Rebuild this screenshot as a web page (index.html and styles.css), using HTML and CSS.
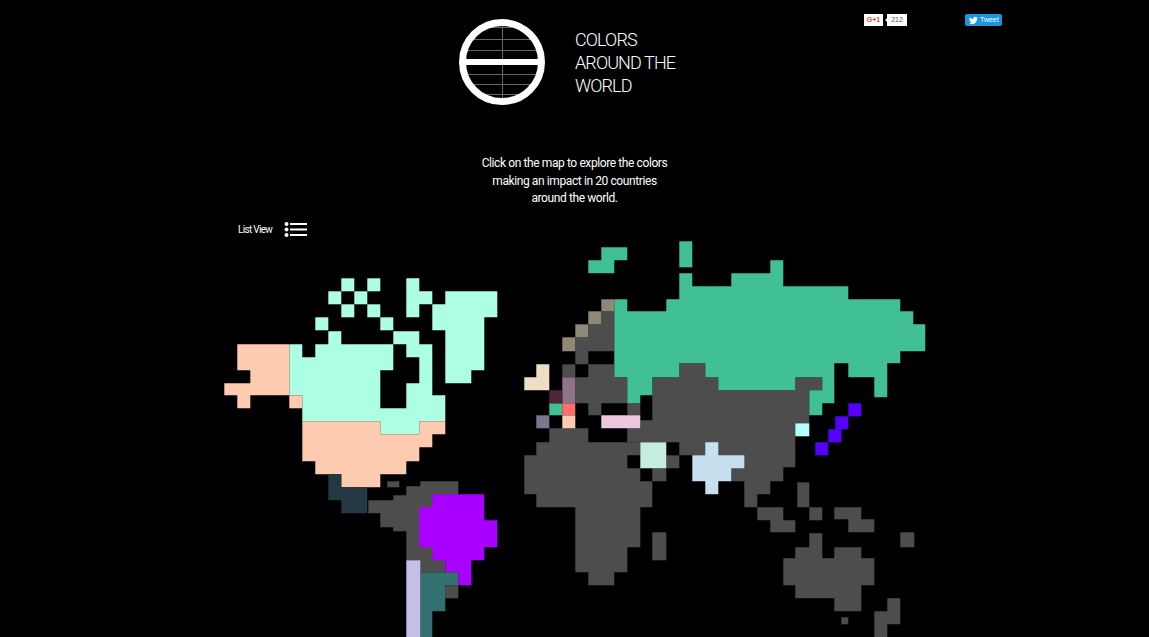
FILE: index.html
```html
<!DOCTYPE html>
<html lang="en">
<head>
    <meta charset="UTF-8">
    <meta name="viewport" content="width=device-width, initial-scale=1.0">
    <title>Colors Around the World</title>
    <link rel="stylesheet" href="styles.css">
</head>
<body>
    <div class="share">
        <div class="gplus">
            <span class="gplus-btn">G+1</span>
            <span class="gplus-count">212</span>
        </div>
        <div class="tweet">
            <svg viewBox="0 0 24 24" width="9" height="9"><path fill="#fff" d="M23.6 4.6c-.9.4-1.8.6-2.8.8 1-.6 1.8-1.5 2.1-2.7-.9.6-2 1-3.1 1.2C18.9 2.9 17.6 2.3 16.3 2.3c-2.7 0-4.900 2.200-4.900 4.900 0 .4 0 .8.1 1.100C7.500 8.100 3.900 6.100 1.500 3.100c-.4.700-.7 1.600-.7 2.500 0 1.700.9 3.200 2.200 4.100-.8 0-1.600-.2-2.200-.6v.1c0 2.400 1.700 4.400 3.900 4.800-.4.1-.8.2-1.300.2-.3 0-.6 0-.9-.1.6 2 2.400 3.400 4.600 3.400-1.700 1.300-3.800 2.100-6.100 2.100-.4 0-.8 0-1.200-.1 2.200 1.400 4.800 2.200 7.500 2.200 9.100 0 14-7.500 14-14v-.6c1-.7 1.800-1.600 2.500-2.500z"/></svg>
            <span>Tweet</span>
        </div>
    </div>

    <header class="header">
        <svg class="logo" viewBox="0 0 86 86" width="86" height="86">
            <path class="logo-grid" d="M30 8.500H56M14 20.500H72M8 31.500H78M8 55.500H78M14 65.500H72M25 75.500H61M43.500 6V80"/>
            <circle class="logo-ring" cx="43" cy="43" r="39.500"/>
            <rect class="logo-bar" x="4" y="40" width="78" height="6"/>
        </svg>
        <h1 class="title">COLORS<br>AROUND THE<br>WORLD</h1>
    </header>

    <p class="intro">Click on the map to explore the colors<br>making an impact in 20 countries<br>around the world.</p>

    <div class="list-view">
        <span>List View</span>
        <svg viewBox="0 0 23 15" width="23" height="15">
            <circle cx="2.500" cy="2" r="2" fill="#fff"/>
            <circle cx="2.500" cy="7.500" r="2" fill="#fff"/>
            <circle cx="2.500" cy="13" r="2" fill="#fff"/>
            <path d="M6 2H23M6 7.500H23M6 13H23" stroke="#fff" stroke-width="2"/>
        </svg>
    </div>

    <svg class="map" viewBox="-0.3 239.700 1149 397" width="1149" height="397">
        <!-- base land -->
        <g class="land">
            <path d="M387 481H399V487H387Z"/>
            <path d="M420 481H458V500H445V572H419V560H406V531H393V527H380V513H368V500H393V495H406V486H420Z"/>
            <path d="M445 585H458V598H445Z"/>
            <path d="M601 311H614V351H588V364H575V337H588V324H601Z"/>
            <path d="M562 364H575V377H562Z"/>
            <path d="M588 364H614V377H627V403H640V415H627V403H601V415H588V403H575V377H588Z"/>
            <path d="M652 377H679V363H705V377H718V390H795V377H822V390H809V423H795V467H783V481H770V494H757V507H744V481H731V468H705V455H679V442H627V428H640V420H652Z"/>
            <path d="M666 455H679V468H666Z"/>
            <path d="M652 468H666V481H652Z"/>
            <path d="M549 428H588V442H640V455H627V468H640V481H652V507H640V547H627V572H614V585H588V572H575V507H536V494H524V455H536V442H549Z"/>
            <path d="M652 532H666V560H652Z"/>
            <path d="M797 482H809V507H797Z"/>
            <path d="M809 507H822V520H809Z"/>
            <path d="M757 507H783V520H795V532H770V520H757Z"/>
            <path d="M834 507H861V519H874V532H848V519H834Z"/>
            <path d="M900 532H914V547H900Z"/>
            <path d="M809 533H822V558H834V547H861V558H874V585H861V611H834V598H795V585H783V558H795V547H809Z"/>
            <path d="M841 617H848V624H841Z"/>
            <path d="M887 598H900V624H887V637H874V611H887Z"/>
        </g>

        <!-- north america -->
        <g class="mint">
            <path d="M341 278H354V291H341Z"/>
            <path d="M367 278H380V291H367Z"/>
            <path d="M328 291H341V304H328Z"/>
            <path d="M354 291H367V304H354Z"/>
            <path d="M341 304H354V317H341Z"/>
            <path d="M367 304H380V317H367Z"/>
            <path d="M315 317H328V330H315Z"/>
            <path d="M380 317H393V330H380Z"/>
            <path d="M406 278H419V291H432V304H419V317H406Z"/>
            <path d="M445 291H497V317H484V370H471V383H445V330H432V304H445Z"/>
            <path d="M289 344H302V357H315V344H328V331H341V344H393V370H380V408H406V383H419V357H406V344H393V331H419V344H432V395H445V421H419V434H380V421H302V395H289Z"/>
        </g>
        <g class="peach">
            <path d="M237 344H289V395H250V408H237V395H224V383H250V370H237Z"/>
            <path d="M289 395H302V408H289Z"/>
            <path d="M302 421H380V434H419V421H445V434H432V447H419V461H406V474H380V487H341V474H315V461H302Z"/>
            <path d="M562 415H575V428H562Z"/>
        </g>
        <path class="dark-teal" d="M328 474H341V487H367V513H341V500H328Z"/>

        <!-- south america -->
        <path class="purple" d="M432 494H484V520H497V547H484V560H471V585H458V572H445V560H432V547H419V507H432Z"/>
        <path class="teal" d="M420 572H458V585H445V611H432V637H420Z"/>
        <path class="lavender" d="M406 560H420V637H406Z"/>

        <!-- russia -->
        <g class="green">
            <path d="M601 247H627V260H614V273H588V260H601Z"/>
            <path d="M679 241H692V267H679Z"/>
            <path d="M614 299H627V311H666V299H679V273H692V286H731V273H770V260H783V286H848V299H900V311H913V324H925V351H900V363H887V397H874V377H848V363H834V403H822V415H809V390H822V377H795V390H718V377H705V363H679V377H652V395H640V403H627V377H614Z"/>
            <path d="M549 403H562V415H549Z"/>
        </g>

        <!-- europe and the rest -->
        <g class="taupe">
            <path d="M601 299H614V311H601Z"/>
            <path d="M588 311H601V324H588Z"/>
            <path d="M575 324H588V337H575Z"/>
            <path d="M562 337H575V351H562Z"/>
        </g>
        <path class="cream" d="M536 364H549V390H524V377H536Z"/>
        <path class="mauve" d="M562 377H575V403H562Z"/>
        <path class="plum" d="M549 390H562V403H549Z"/>
        <path class="red" d="M562 403H575V415H562Z"/>
        <path class="slate" d="M536 415H549V428H536Z"/>
        <path class="pink" d="M601 415H640V428H601Z"/>
        <path class="pale-green" d="M640 442H666V468H640Z"/>
        <path class="pale-blue" d="M705 442H718V455H744V468H731V481H718V494H705V481H692V455H705Z"/>
        <path class="cyan" d="M795 423H809V436H795Z"/>
        <g class="violet">
            <path d="M848 403H861V416H848Z"/>
            <path d="M835 416H848V429H835Z"/>
            <path d="M828 429H841V442H828Z"/>
            <path d="M815 442H828V455H815Z"/>
        </g>
    </svg>
</body>
</html>
```

FILE: styles.css
```css
html, body {
    height: 100%;
    overflow: hidden;
}
body {
    margin: 0;
    background: #000;
    color: #fff;
    font-family: Roboto, sans-serif;
    position: relative;
}
.share {
    position: absolute;
    top: 14px;
    left: 864px;
    width: 138px;
    display: flex;
    justify-content: space-between;
}
.gplus {
    display: flex;
    gap: 4px;
    height: 12px;
    font: 7px/12px "Liberation Sans", sans-serif;
}
.gplus-btn {
    width: 19px;
    background: #fff;
    color: #dd4b39;
    font-weight: bold;
    text-align: center;
}
.gplus-count {
    position: relative;
    width: 20px;
    background: #fff;
    color: #555;
    text-align: center;
}
.gplus-count::before {
    content: "";
    position: absolute;
    left: -2px;
    top: 4px;
    border-style: solid;
    border-width: 2px 2px 2px 0;
    border-color: transparent #ddd transparent transparent;
}
.tweet {
    display: flex;
    align-items: center;
    gap: 2px;
    width: 37px;
    height: 12px;
    box-sizing: border-box;
    padding-left: 4px;
    background: #1b95e0;
    border-radius: 2px;
    font: 7px/12px "Liberation Sans", sans-serif;
}
.header {
    display: flex;
    justify-content: center;
    gap: 30px;
    padding-top: 19px;
}
.logo {
    display: block;
}
.logo-grid {
    fill: none;
    stroke: #666;
    stroke-width: 1;
}
.logo-ring {
    fill: none;
    stroke: #fff;
    stroke-width: 7;
}
.logo-bar {
    fill: #fff;
}
.title {
    margin: 9px 0 0;
    width: 115px;
    font-size: 18px;
    font-weight: 300;
    line-height: 23px;
    letter-spacing: -0.9px;
    white-space: nowrap;
}
.intro {
    margin: 50px 0 0;
    font-size: 12px;
    line-height: 17.500px;
    letter-spacing: -0.4px;
    text-align: center;
}
.list-view {
    display: flex;
    align-items: center;
    gap: 12px;
    margin: 14px 0 0 238px;
    font-size: 10px;
    letter-spacing: -0.7px;
}
.list-view svg {
    display: block;
}
.map {
    display: block;
    position: absolute;
    top: 240px;
    left: 0;
}
.land { fill: #4d4d4d; }
.mint { fill: #adffe3; }
.peach { fill: #ffcbb0; }
.dark-teal { fill: #233842; }
.purple { fill: #a900ff; }
.teal { fill: #347070; }
.lavender { fill: #c3c0ea; }
.green { fill: #41c095; }
.taupe { fill: #908876; }
.cream { fill: #ecdfc6; }
.mauve { fill: #917388; }
.plum { fill: #4f2639; }
.red { fill: #ff6e6e; }
.slate { fill: #7e7691; }
.pink { fill: #ecc6da; }
.pale-green { fill: #c5ecdf; }
.pale-blue { fill: #c6e0ef; }
.cyan { fill: #b5ffff; }
.violet { fill: #5500ff; }
```
